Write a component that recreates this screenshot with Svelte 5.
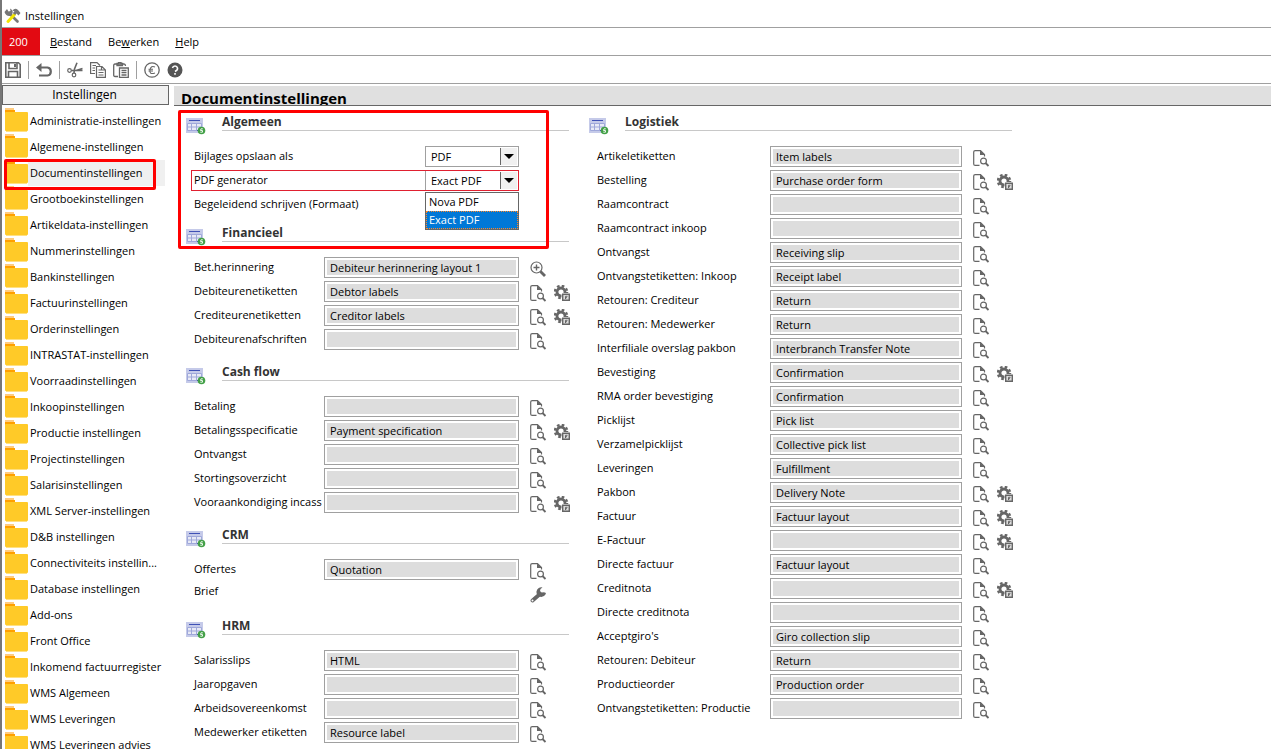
<script lang="ts">
    type Row = { label: string; value?: string; icons?: string[] };
    type Section = { title: string; rows: Row[]; spaced?: boolean };

    const view = ['doc'];
    const both = ['doc', 'gear'];

    const menu = [
        { before: '', key: 'B', after: 'estand' },
        { before: 'Be', key: 'w', after: 'erken' },
        { before: '', key: 'H', after: 'elp' }
    ];

    const folders = [
        'Administratie-instellingen', 'Algemene-instellingen', 'Documentinstellingen',
        'Grootboekinstellingen', 'Artikeldata-instellingen', 'Nummerinstellingen',
        'Bankinstellingen', 'Factuurinstellingen', 'Orderinstellingen',
        'INTRASTAT-instellingen', 'Voorraadinstellingen', 'Inkoopinstellingen',
        'Productie instellingen', 'Projectinstellingen', 'Salarisinstellingen',
        'XML Server-instellingen', 'D&B instellingen', 'Connectiviteits instellin...',
        'Database instellingen', 'Add-ons', 'Front Office', 'Inkomend factuurregister',
        'WMS Algemeen', 'WMS Leveringen', 'WMS Leveringen advies'
    ];

    const left: Section[] = [
        { title: 'Financieel', rows: [
            { label: 'Bet.herinnering', value: 'Debiteur herinnering layout 1', icons: ['zoom'] },
            { label: 'Debiteurenetiketten', value: 'Debtor labels', icons: both },
            { label: 'Crediteurenetiketten', value: 'Creditor labels', icons: both },
            { label: 'Debiteurenafschriften', value: '', icons: view }
        ] },
        { title: 'Cash flow', spaced: true, rows: [
            { label: 'Betaling', value: '', icons: view },
            { label: 'Betalingsspecificatie', value: 'Payment specification', icons: both },
            { label: 'Ontvangst', value: '', icons: view },
            { label: 'Stortingsoverzicht', value: '', icons: view },
            { label: 'Vooraankondiging incass', value: '', icons: both }
        ] },
        { title: 'CRM', spaced: true, rows: [
            { label: 'Offertes', value: 'Quotation', icons: view },
            { label: 'Brief', icons: ['wrench'] }
        ] },
        { title: 'HRM', spaced: true, rows: [
            { label: 'Salarisslips', value: 'HTML', icons: view },
            { label: 'Jaaropgaven', value: '', icons: view },
            { label: 'Arbeidsovereenkomst', value: '', icons: view },
            { label: 'Medewerker etiketten', value: 'Resource label', icons: view }
        ] }
    ];

    const right: Section[] = [
        { title: 'Logistiek', rows: [
            { label: 'Artikeletiketten', value: 'Item labels', icons: view },
            { label: 'Bestelling', value: 'Purchase order form', icons: both },
            { label: 'Raamcontract', value: '', icons: view },
            { label: 'Raamcontract inkoop', value: '', icons: view },
            { label: 'Ontvangst', value: 'Receiving slip', icons: view },
            { label: 'Ontvangstetiketten: Inkoop', value: 'Receipt label', icons: view },
            { label: 'Retouren: Crediteur', value: 'Return', icons: view },
            { label: 'Retouren: Medewerker', value: 'Return', icons: view },
            { label: 'Interfiliale overslag pakbon', value: 'Interbranch Transfer Note', icons: view },
            { label: 'Bevestiging', value: 'Confirmation', icons: both },
            { label: 'RMA order bevestiging', value: 'Confirmation', icons: view },
            { label: 'Picklijst', value: 'Pick list', icons: view },
            { label: 'Verzamelpicklijst', value: 'Collective pick list', icons: view },
            { label: 'Leveringen', value: 'Fulfillment', icons: view },
            { label: 'Pakbon', value: 'Delivery Note', icons: both },
            { label: 'Factuur', value: 'Factuur layout', icons: both },
            { label: 'E-Factuur', value: '', icons: both },
            { label: 'Directe factuur', value: 'Factuur layout', icons: view },
            { label: 'Creditnota', value: '', icons: both },
            { label: 'Directe creditnota', value: '', icons: view },
            { label: "Acceptgiro's", value: 'Giro collection slip', icons: view },
            { label: 'Retouren: Debiteur', value: 'Return', icons: view },
            { label: 'Productieorder', value: 'Production order', icons: view },
            { label: 'Ontvangstetiketten: Productie', value: '', icons: view }
        ] }
    ];

    const generators = ['Nova PDF', 'Exact PDF'];
    const iconNames: Record<string, string> = {
        doc: 'Voorbeeld', gear: 'Layout instellingen', zoom: 'Zoeken', wrench: 'Onderhoud'
    };

    let selected = $state('Documentinstellingen');
    let attachment = $state('PDF');
    let generator = $state('Exact PDF');
</script>

{#snippet actionIcon(name: string)}
    <svg width="17" height="17" viewBox="0 0 17 17" fill="none" stroke="#666">
        {#if name === 'doc'}
            <path d="M6.500 15.400H2.200Q.7 15.400.7 14V2Q.7.6 2.200.6H7.500L11.500 4.500V6.500" stroke-width="1.200" />
            <path d="M7 .4V5H12Z" fill="#666" stroke="none" />
            <circle cx="10.500" cy="11" r="2.900" stroke-width="1.200" />
            <path d="M12.500 13L15.500 16" stroke-width="1.800" />
        {:else if name === 'gear'}
            <circle cx="7" cy="7" r="4" stroke-width="2.800" />
            <circle cx="7" cy="7" r="6.100" stroke-width="2.400" stroke-dasharray="2.600 2.191" />
            <path d="M7.500 8H17V17H7.500Z" fill="#fff" stroke="none" />
            <path d="M8.700 9.200H15.300V15.300H8.700Z" stroke-width="1.400" fill="#ddd" />
            <path d="M11.500 14V11.300H13.500M11.500 12.700H13" />
        {:else if name === 'zoom'}
            <circle cx="6.500" cy="6.500" r="5.500" stroke-width="1.200" />
            <path d="M3.500 6.500H9.500M6.500 3.500V9.500" stroke-width="1.400" />
            <path d="M10.500 10.500L15 15" stroke-width="2.800" />
        {:else}
            <path d="M10 7L2.500 13.500" stroke-width="3.800" stroke-linecap="round" />
            <path d="M12.500 .5A4.800 4.800 0 1 0 16 6L14 5.200L11.500 5.500L10 4L10.500 2Z" fill="#666" stroke="none" />
            <circle cx="2.500" cy="13.500" r="1" fill="#fff" stroke="none" />
        {/if}
    </svg>
{/snippet}

{#snippet heading(title: string)}
    <header class="section-head">
        <svg width="20" height="17" viewBox="0 0 20 17">
            <rect width="17" height="15" fill="#c5cae9" />
            <path d="M3 2.500H14" stroke="#3f51b5" />
            <path d="M1.500 5.500H15.500V12.500H1.500Z" fill="#e8eaf6" stroke="#9fa8da" />
            <path d="M1.500 9H15.500M5.500 5.500V12.500M10.500 5.500V12.500" stroke="#9fa8da" />
            <path d="M11 12.500H13" stroke="#3f51b5" />
            <circle cx="15.500" cy="12.500" r="3.800" fill="#43a047" />
            <path d="M16.800 10.800H15L14.500 12.500H16.500V14.200H14.300" fill="none" stroke="#e8f5e9" />
        </svg>
        <h2>{title}</h2>
    </header>
{/snippet}

{#snippet block(section: Section)}
    <section class:spaced={section.spaced}>
        {@render heading(section.title)}
        {#each section.rows as row, i}
            <div class="row" class:plain={row.value === undefined}>
                <label for="{section.title}-{i}">{row.label}</label>
                {#if row.value !== undefined}
                    <input id="{section.title}-{i}" value={row.value} readonly />
                {:else}
                    <span></span>
                {/if}
                <div class="actions">
                    {#each row.icons ?? [] as icon}
                        <button id={row.value === undefined ? `${section.title}-${i}` : undefined} aria-label={iconNames[icon]}>
                            {@render actionIcon(icon)}
                        </button>
                    {/each}
                </div>
            </div>
        {/each}
    </section>
{/snippet}

{#snippet arrow()}
    <span class="arrow">
        <svg width="10" height="5" viewBox="0 0 10 5"><path d="M0 0H10L5 5Z" /></svg>
    </span>
{/snippet}

<div class="window">
    <div class="titlebar">
        <svg width="17" height="16" viewBox="0 0 17 16" fill="none">
            <path d="M6 6L13.500 13.500" stroke="#777" stroke-width="2.600" stroke-linecap="round" />
            <path d="M.5 4L3 1L4.500 3.500L6.500 3L6 .5Q9.500 2 8.500 5.500L6 8Q2 8.500 .5 4Z" fill="#777" />
            <path d="M10.500 6.500L4 13.500" stroke="#f3e600" stroke-width="3" stroke-linecap="round" />
            <path d="M8.500 2.500Q11-.5 14 2L16.500 5L14.500 7.500L12.500 5.500L11 7L8.800 5L10.500 3.500Z" fill="#777" />
        </svg>
        <span>Instellingen</span>
    </div>

    <nav class="menubar">
        <span class="company">200</span>
        {#each menu as item}
            <button>{item.before}<u>{item.key}</u>{item.after}</button>
        {/each}
    </nav>

    <div class="toolbar">
        <button aria-label="Opslaan">
            <svg width="16" height="16" viewBox="0 0 16 16" fill="none" stroke="#666" stroke-width="1.600">
                <path d="M.8.8H13.500L15.200 2.500V15.200H.8Z" />
                <path d="M4 1V6.500H12V1M3.500 15V9.500H12.500V15" />
                <path d="M9 2H11V5H9Z" fill="#666" stroke="none" />
            </svg>
        </button>
        <i></i>
        <button aria-label="Ongedaan maken">
            <svg width="16" height="16" viewBox="0 0 16 16" fill="none" stroke="#666" stroke-width="2.200">
                <path d="M3 5.500H11.500Q14.800 6 14.800 9.500T11.500 13.500H3" />
                <path d="M0 5.500L5.500 1V10Z" fill="#666" stroke="none" />
            </svg>
        </button>
        <i></i>
        <button aria-label="Knippen">
            <svg width="16" height="16" viewBox="0 0 16 16" fill="none" stroke="#666" stroke-width="1.200">
                <circle cx="2.500" cy="8.500" r="1.800" />
                <circle cx="7" cy="13" r="1.800" />
                <path d="M4.300 8.500H9L15.500 6.500M7 11L7.500 7L10 .8M15.500 8.500H9" stroke-width="1.600" />
            </svg>
        </button>
        <button aria-label="Kopiëren">
            <svg width="16" height="16" viewBox="0 0 16 16" fill="none" stroke="#666" stroke-width="1.200">
                <path d="M5 11.500H.6V.6H7L10 3.500M2.500 3.500H6M2.500 6H5M2.500 8.500H5" />
                <path d="M6.500 4.500H12L15.400 8V15.400H6.500ZM8.500 8H11M8.500 10.500H13.500M8.500 13H13.500M11.500 5V8H15" />
            </svg>
        </button>
        <button aria-label="Plakken">
            <svg width="16" height="16" viewBox="0 0 16 16" fill="none" stroke="#666" stroke-width="1.300">
                <path d="M5 14.500H2Q.7 14.500.7 13V3.500Q.7 2 2 2H11Q12.500 2 12.500 4" />
                <path d="M4 3.500V1.500H5.500V.7H8V1.500H9.500V3.500Z" />
                <path d="M6.500 6H15.300V15.300H6.500ZM8.500 8.500H13.500M8.500 10.700H13.500M8.500 13H13.500" />
            </svg>
        </button>
        <i></i>
        <button aria-label="Valuta">
            <svg width="16" height="16" viewBox="0 0 16 16" fill="none" stroke="#666" stroke-width="1.300">
                <circle cx="8" cy="8" r="7.200" />
                <path d="M11 5Q7 3 6 8T11 11M4.500 7.200H9M4.500 9H9" stroke-width="1.100" />
            </svg>
        </button>
        <button aria-label="Help">
            <svg width="16" height="16" viewBox="0 0 16 16" fill="none" stroke="#fff">
                <circle cx="8" cy="8" r="7.500" fill="#555" stroke="none" />
                <path d="M5.500 6Q6 4 8 4T10.500 6T8 9.500M8 11V12.700" stroke-width="1.600" />
            </svg>
        </button>
    </div>

    <div class="body">
        <aside>
            <h3>Instellingen</h3>
            {#each folders as folder}
                <button class="folder" class:selected={folder === selected} onclick={() => (selected = folder)}>
                    <svg width="23" height="26" viewBox="0 0 23 26">
                        <path d="M0 0H9V3H0Z" fill="#ffcc80" />
                        <path d="M0 2H10V6H0Z" fill="#ffa000" />
                        <path d="M1 21H22V24H1Z" fill="#ffe082" />
                        <rect y="4" width="23" height="19" rx="1" fill="#ffca28" />
                    </svg>
                    <span>{folder}</span>
                    {#if folder === 'Documentinstellingen'}
                        <b class="marker"></b>
                    {/if}
                </button>
            {/each}
        </aside>

        <main>
            <h1>Documentinstellingen</h1>
            <div class="columns">
                <div class="column">
                    <section>
                        {@render heading('Algemeen')}
                        <div class="choice">
                            <label for="attachment">Bijlages opslaan als</label>
                            <div class="combo">
                                <select id="attachment" bind:value={attachment}>
                                    <option>PDF</option>
                                    <option>HTML</option>
                                </select>
                                {@render arrow()}
                            </div>
                        </div>
                        <div class="choice changed">
                            <label for="generator">PDF generator</label>
                            <div class="combo">
                                <select id="generator" bind:value={generator}>
                                    {#each generators as name}
                                        <option>{name}</option>
                                    {/each}
                                </select>
                                {@render arrow()}
                                <div class="list">
                                    {#each generators as name}
                                        <button class:active={name === generator} onclick={() => (generator = name)}>{name}</button>
                                    {/each}
                                </div>
                            </div>
                        </div>
                        <div class="choice">
                            <span>Begeleidend schrijven (Formaat)</span>
                        </div>
                    </section>
                    {#each left as section}
                        {@render block(section)}
                    {/each}
                    <b class="marker"></b>
                </div>
                <div class="column wide">
                    {#each right as section}
                        {@render block(section)}
                    {/each}
                </div>
            </div>
        </main>
    </div>
</div>

<style>
    :global(body) {
        background: #fff;
    }

    .window {
        display: flex;
        flex-direction: column;
        box-sizing: border-box;
        height: 100vh;
        overflow: hidden;
        border-left: 2px solid #777;
        font-family: "Open Sans", sans-serif;
        font-size: 11px;
        color: #000;
    }

    button, input, select {
        font: inherit;
        color: inherit;
    }

    button {
        padding: 0;
        border: none;
        background: none;
    }

    svg {
        display: block;
        flex: none;
    }

    .titlebar, .menubar, .toolbar {
        display: flex;
        flex: none;
        align-items: center;
        height: 27px;
        border-bottom: 1px solid #a0a0a0;
    }

    .titlebar {
        gap: 4px;
        padding: 4px 0 0 2px;
        height: 23px;
    }

    .menubar {
        gap: 16px;
    }

    .company {
        width: 38px;
        margin-right: -6px;
        line-height: 27px;
        text-indent: 7px;
        color: #fff;
        background: #e20a12;
    }

    .toolbar {
        gap: 7px;
        padding-left: 3px;
    }

    .toolbar i {
        width: 1px;
        height: 18px;
        background: #a0a0a0;
    }

    .body {
        display: flex;
        flex: 1;
        min-height: 0;
    }

    aside {
        display: flex;
        flex: none;
        flex-direction: column;
        width: 167px;
        padding-top: 1px;
    }

    h3 {
        box-sizing: border-box;
        margin: 0 0 3px;
        padding-right: 2px;
        height: 20px;
        border: 1px solid #666;
        font-size: 12px;
        font-weight: 400;
        line-height: 18px;
        text-align: center;
        background: #f0f0f0;
    }

    .folder {
        position: relative;
        display: flex;
        flex: none;
        height: 26px;
        margin: 0 4px 0 3px;
        text-align: left;
        line-height: 26px;
        white-space: nowrap;
    }

    .folder span {
        flex: 1;
        padding-left: 2px;
    }

    .folder.selected span {
        background: #f0f0f0;
    }

    .marker {
        position: absolute;
        box-sizing: border-box;
        border: 3px solid #f00;
        border-radius: 2px;
        pointer-events: none;
    }

    .folder .marker {
        z-index: 1;
        inset: -1px 9px -4px -1px;
    }

    main {
        flex: 1;
        min-width: 0;
        padding: 2px 0 0 5px;
    }

    h1 {
        box-sizing: border-box;
        height: 20px;
        margin: 0;
        padding-left: 7px;
        overflow: hidden;
        border-bottom: 1px solid #666;
        font-size: 15px;
        line-height: 25px;
        background: #e0e0e0;
    }

    .columns {
        display: flex;
        gap: 20px;
        padding-left: 12px;
    }

    .column {
        position: relative;
        flex: 0 1 383px;
        min-width: 0;
    }

    .column.wide {
        flex-basis: 423px;
    }

    .column > .marker {
        inset: 4px 20px auto -8px;
        height: 139px;
    }

    section {
        display: flex;
        flex-direction: column;
    }

    .spaced {
        margin-top: 4px;
    }

    .section-head {
        display: flex;
        align-items: flex-end;
        gap: 16px;
        height: 25px;
        margin-bottom: 14px;
    }

    .section-head svg {
        position: relative;
        top: 4px;
    }

    h2 {
        flex: 1;
        margin: 0;
        border-bottom: 1px solid #c8c8c8;
        font-size: 12px;
        line-height: 17px;
        color: #333;
    }

    .row {
        display: grid;
        grid-template-columns: 130px 195px auto;
        height: 24px;
        padding-left: 8px;
    }

    .wide .row {
        grid-template-columns: 173px 192px auto;
    }

    .row label {
        line-height: 22px;
        white-space: nowrap;
    }

    .row.plain label {
        line-height: 18px;
    }

    input {
        box-sizing: border-box;
        width: 100%;
        height: 21px;
        margin: 1px 0 0;
        padding: 2px 2px 2px 5px;
        border: 1px solid #a0a0a0;
        background: #ddd;
        box-shadow: inset 0 0 0 2px #fff;
        outline: none;
    }

    .actions {
        display: flex;
        align-items: flex-start;
        gap: 7px;
        padding: 5px 0 0 11px;
    }

    .choice {
        display: flex;
        justify-content: space-between;
        box-sizing: border-box;
        height: 21px;
        margin: 1px 50px 2px 5px;
        border: 0 solid #e02030;
        padding-left: 3px;
        line-height: 20px;
    }

    .choice.changed {
        border-width: 1px;
        padding-left: 2px;
        line-height: 18px;
    }

    .combo {
        position: relative;
        display: flex;
        width: 94px;
        box-sizing: border-box;
        border: 1px solid #a0a0a0;
    }

    .changed .combo {
        width: 93px;
        border-width: 0 0 0 1px;
    }

    select {
        appearance: none;
        width: 100%;
        padding: 0 20px 0 5px;
        border: none;
        background: none;
        outline: none;
    }

    .arrow {
        position: absolute;
        inset: 1px 1px 1px auto;
        display: grid;
        place-items: center;
        width: 16px;
        border-left: 1px solid #666;
        background: #f0f0f0;
        pointer-events: none;
    }

    .list {
        position: absolute;
        z-index: 1;
        top: 21px;
        left: -1px;
        right: -1px;
        border: 1px solid #666;
        background: #fff;
    }

    .list button {
        display: block;
        box-sizing: border-box;
        width: 100%;
        height: 18px;
        padding-left: 3px;
        line-height: 18px;
        text-align: left;
    }

    .list .active {
        color: #fff;
        background: #0078d7;
        outline: 1px dotted #ff8728;
        outline-offset: -1px;
    }
</style>
